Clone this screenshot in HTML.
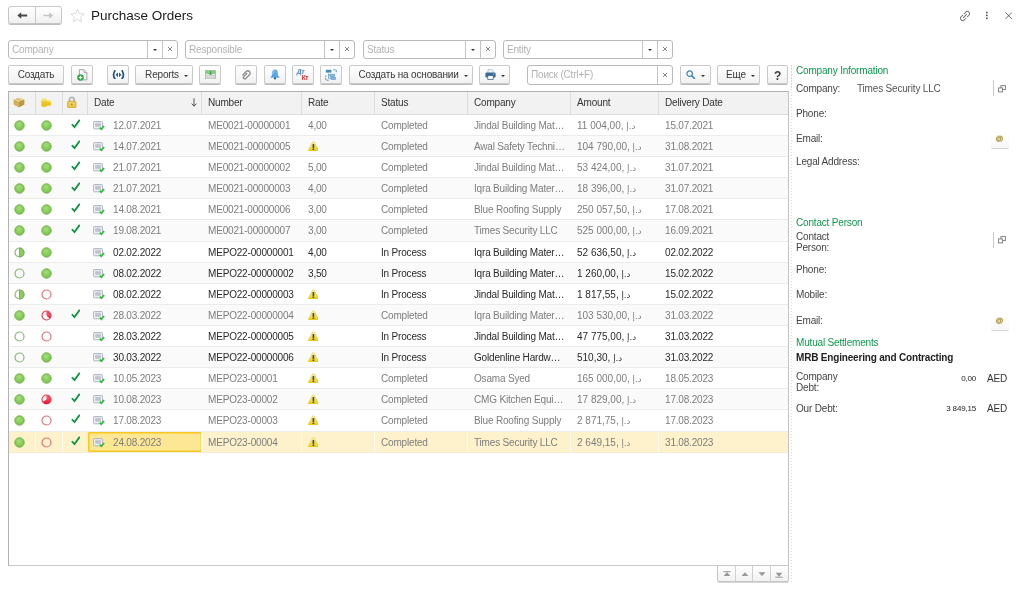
<!DOCTYPE html>
<html lang="en">
<head>
<meta charset="utf-8">
<title>Purchase Orders</title>
<style>
*{box-sizing:border-box;margin:0;padding:0}
html,body{width:1024px;height:590px;overflow:hidden;background:#fff}
body{position:relative;font-family:"Liberation Sans","DejaVu Sans",sans-serif;font-size:10px;letter-spacing:-0.18px;color:#333;line-height:1}
.abs{position:absolute}
.btn{position:absolute;top:65px;height:19px;border:1px solid #c9c9c9;border-radius:2px;background:linear-gradient(#ffffff,#f1f1f1);box-shadow:0 1px 0 #b9b9b9;display:flex;align-items:center;justify-content:center;color:#3a3a3a;white-space:nowrap;padding-top:0}
.btn svg{display:block}
.caret{display:inline-block;width:0;height:0;border-left:2.5px solid transparent;border-right:2.5px solid transparent;border-top:2.5px solid #333;margin-left:5px;position:relative;top:1px}
.fld{position:absolute;top:40px;height:19px;border:1px solid #b9b9b9;border-radius:3px;background:#fff;color:#b2b2b2}
.fld .ph{position:absolute;left:3px;top:4px}
.fld .dv{position:absolute;top:0;bottom:0;width:1px;background:#c4c4c4}
.fld .dd{position:absolute;margin-left:0.7px;top:7.5px;width:0;height:0;border-left:2.5px solid transparent;border-right:2.5px solid transparent;border-top:2.5px solid #333}
.fld .x{position:absolute;top:5px;width:6px;height:6px}
#tbl{position:absolute;left:8px;top:91px;width:781px;height:475px;border:1px solid #b2b2b2;border-bottom-color:#cacaca;border-right-color:#c4c4c4;background:#fff;overflow:hidden}
#hdr{position:absolute;left:0;top:0;width:780px;height:24px;background:#f2f2f2;border-bottom:1px solid #dcdcdc}
.h{position:absolute;top:0;height:23px;border-left:1px solid #dcdcdc;padding-left:6px;line-height:24px;color:#333}
.h:first-child{border-left:none}
.row{position:absolute;left:0;width:780px;border-bottom:1px solid #ececec;color:#7d7d7d;background:#fff}
.row.alt{background:#fafafa}
.row.dark{color:#2a2a2a}
.row.sel{background:#fdf2cb;border-bottom-color:#f3ecd2}
.c{position:absolute;top:0;bottom:0;padding-left:7px;line-height:inherit;white-space:nowrap;overflow:hidden}
.row.sel .c{box-shadow:inset 1px 0 0 #fffbee}
.row.sel .c.cur + .c{box-shadow:inset 2px 0 0 #fffbee}
.row.sel .c:first-child{box-shadow:none}
.c.ic{padding-left:0}
.ci{position:absolute;left:6.2px;top:5px;width:11px;height:11px}
.chk{position:absolute;left:8.6px;top:4.4px;width:9.6px;height:9.4px}
.doc{position:absolute;left:6px;top:6px;width:12px;height:10px}
.warn{position:absolute;left:6.6px;top:4.6px;width:10.8px;height:10.8px}
.dt{position:absolute;left:26px;top:0}
.c.cur{background:#fde694;border:1px solid #f8c822;border-radius:1px;box-shadow:inset 0 0 0 1px #fbd858 !important;line-height:19px;margin-left:1px}
.c.cur .doc{left:4px;top:5px}
.c.cur .dt{left:24px;top:0}
.ar{font-family:"DejaVu Sans",sans-serif;font-size:8.6px}
.lbl{position:absolute;left:796px;color:#444;white-space:nowrap}
.lbl.g{color:#0a9a4a}
</style>
</head>
<body>
<div id="root" style="position:absolute;left:0;top:0;width:1024px;height:590px;will-change:transform">
<svg width="0" height="0" style="position:absolute">
<defs>
<radialGradient id="gg" cx="0.45" cy="0.35" r="0.75"><stop offset="0" stop-color="#a6dd78"/><stop offset="1" stop-color="#6cbf3f"/></radialGradient>
<linearGradient id="wg" x1="0" y1="0" x2="0" y2="1"><stop offset="0" stop-color="#fdf6c0"/><stop offset="0.55" stop-color="#f6e050"/><stop offset="1" stop-color="#eccb00"/></linearGradient>
<radialGradient id="rg" gradientUnits="userSpaceOnUse" cx="7" cy="4" r="6"><stop offset="0" stop-color="#ff5470"/><stop offset="1" stop-color="#e4102c"/></radialGradient>
</defs>
</svg>

<!-- nav -->
<div class="abs" style="left:8px;top:6px;width:54px;height:18px;border:1px solid #c6c6c6;border-radius:3px;background:linear-gradient(#fff,#f0f0f0);box-shadow:0 1px 0 #bdbdbd">
  <div class="abs" style="left:26px;top:0;bottom:0;width:1px;background:#c9c9c9"></div>
  <svg class="abs" style="left:8.2px;top:5.2px" width="10.4" height="7" viewBox="0 0 10.4 7"><path d="M0.3 3.5 4.2 0.2V2.6H10.2V4.4H4.2V6.8Z" fill="#484848"/></svg>
  <svg class="abs" style="left:34.2px;top:5.2px" width="10.4" height="7" viewBox="0 0 10.4 7"><path d="M10.1 3.5 6.2 0.2V2.7H0.2V4.3H6.2V6.8Z" fill="#c6c6c6"/></svg>
</div>
<svg class="abs" style="left:70px;top:8px" width="15" height="15" viewBox="0 0 15 15"><path d="M7.5 1.2 9.4 5.6 14.1 6 10.5 9.1 11.6 13.8 7.5 11.3 3.4 13.8 4.5 9.1 0.9 6 5.6 5.6Z" fill="#fff" stroke="#d6d6d6" stroke-width="0.9" stroke-linejoin="round"/></svg>
<div class="abs" style="left:91px;top:8px;font-size:13.5px;letter-spacing:0;line-height:15px;color:#1c1c1c;white-space:nowrap">Purchase Orders</div>

<!-- top right icons -->
<svg class="abs" style="left:957.6px;top:8.6px" width="14" height="14" viewBox="0 0 14 14"><g transform="rotate(-45 7 7)" fill="none" stroke="#707070" stroke-width="0.95" stroke-linecap="round"><path d="M8 4.8H10.3a2.2 2.2 0 0 1 0 4.4H8"/><path d="M6 4.8H3.7a2.2 2.2 0 0 0 0 4.4H6"/><path d="M4.8 7H9.2"/></g></svg>
<svg class="abs" style="left:985px;top:11px" width="4" height="9" viewBox="0 0 4 9"><rect x="1" y="0.7" width="1.6" height="1.6" fill="#555"/><rect x="1" y="3.6" width="1.6" height="1.6" fill="#555"/><rect x="1" y="6.5" width="1.6" height="1.6" fill="#555"/></svg>
<svg class="abs" style="left:1005px;top:11.6px" width="7.4" height="7.4" viewBox="0 0 8 8"><path d="M0.5 0.5 7.5 7.5M7.5 0.5 0.5 7.5" stroke="#555" stroke-width="0.95" fill="none"/></svg>

<!-- filter fields -->
<div class="fld" style="left:8px;width:170px"><span class="ph">Company</span><i class="dv" style="left:138px"></i><i class="dv" style="left:153px"></i><i class="dd" style="left:143px"></i><svg class="x" style="left:158px" viewBox="0 0 6 6"><path d="M1 1 5 5M5 1 1 5" stroke="#777" stroke-width="0.9"/></svg></div>
<div class="fld" style="left:185px;width:170px"><span class="ph">Responsible</span><i class="dv" style="left:138px"></i><i class="dv" style="left:153px"></i><i class="dd" style="left:143px"></i><svg class="x" style="left:158px" viewBox="0 0 6 6"><path d="M1 1 5 5M5 1 1 5" stroke="#777" stroke-width="0.9"/></svg></div>
<div class="fld" style="left:363px;width:133px"><span class="ph">Status</span><i class="dv" style="left:101px"></i><i class="dv" style="left:116px"></i><i class="dd" style="left:106px"></i><svg class="x" style="left:121px" viewBox="0 0 6 6"><path d="M1 1 5 5M5 1 1 5" stroke="#777" stroke-width="0.9"/></svg></div>
<div class="fld" style="left:503px;width:170px"><span class="ph">Entity</span><i class="dv" style="left:138px"></i><i class="dv" style="left:153px"></i><i class="dd" style="left:143px"></i><svg class="x" style="left:158px" viewBox="0 0 6 6"><path d="M1 1 5 5M5 1 1 5" stroke="#777" stroke-width="0.9"/></svg></div>

<!-- toolbar -->
<div class="btn" style="left:8px;width:56px">Создать</div>
<div class="btn" style="left:71px;width:22px"><svg width="11" height="12" viewBox="0 0 11 12"><path d="M2.4 0.7H7L9.9 3.6V10.9H2.4Z" fill="#f6f7f8" stroke="#9a9ea4" stroke-width="0.9"/><path d="M7 0.7V3.6H9.9" fill="#e4e7ea" stroke="#9a9ea4" stroke-width="0.8"/><circle cx="3.5" cy="8.5" r="3.3" fill="#2eaa48"/><path d="M3.5 6.7V10.3M1.7 8.5H5.3" stroke="#fff" stroke-width="1.2"/></svg></div>
<div class="btn" style="left:107px;width:22px"><svg width="13" height="9.6" viewBox="0 0 12 9"><path d="M2.9 0.3Q-0.2 4.5 2.9 8.7M9.1 0.3Q12.2 4.5 9.1 8.7" fill="none" stroke="#1f5582" stroke-width="1.6"/><path d="M5.5 2.3 3.3 4.5 5.5 6.7ZM6.5 2.3 8.7 4.5 6.5 6.7Z" fill="#1f5582"/></svg></div>
<div class="btn" style="left:135px;width:58px;padding-left:5px">Reports<i class="caret"></i></div>
<div class="btn" style="left:199px;width:22px"><svg width="11" height="9.4" viewBox="0 0 12 10"><rect x="0.5" y="0.5" width="11" height="9" fill="#f4f6f4" stroke="#a4aca4" stroke-width="0.8"/><rect x="0.5" y="0.5" width="11" height="3.6" fill="#86c886"/><path d="M0.5 5.6H11.5M0.5 7.6H11.5" stroke="#a4aca4" stroke-width="0.8"/><path d="M6 1V4.6M4.3 3.4 6 5.2 7.7 3.4" stroke="#2f9a3a" stroke-width="1" fill="none"/></svg></div>
<div class="btn" style="left:235px;width:22px"><svg width="10" height="10" viewBox="0 0 10 10"><g transform="rotate(45 5 5)"><path d="M3.6 2.6V7.4a1.4 1.4 0 0 0 2.8 0V2.2a2.3 2.3 0 0 0-4.6 0V7.6" fill="none" stroke="#8e8e8e" stroke-width="1.35" transform="translate(0.9,0.2)"/></g></svg></div>
<div class="btn" style="left:264px;width:22px"><svg width="10" height="11" viewBox="0 0 10 11"><path d="M5 0.6c-1.9 0-2.7 1.5-2.7 3.3 0 2.1-0.6 3.3-1.7 4.3h8.8C8.3 7.2 7.7 6 7.7 3.9 7.7 2.1 6.9 0.6 5 0.6Z" fill="#5aa6ea"/><path d="M5 0.6c-1.9 0-2.7 1.5-2.7 3.3 0 0.6 0 1.100-0.100 1.600C4 5 5 3 5 0.6Z" fill="#8cc4f4" opacity="0.7"/><path d="M0.600 8.200h8.800" stroke="#3f8ad2" stroke-width="0.7"/><circle cx="5" cy="9.400" r="1.100" fill="#2c5f94"/></svg></div>
<div class="btn" style="left:292px;width:22px"><svg width="14" height="13" viewBox="0 0 14 13" style="letter-spacing:-0.4px"><text x="1.4" y="5.8" font-family="Liberation Sans,sans-serif" font-size="6.9" font-weight="bold" fill="#4d80b6" transform="skewX(-8)">Дт</text><text x="5.8" y="11.8" font-family="Liberation Sans,sans-serif" font-size="6.4" font-weight="bold" fill="#d42a2a">Кт</text></svg></div>
<div class="btn" style="left:320px;width:22px"><svg width="12" height="12" viewBox="0 0 12 12"><g fill="none" stroke="#4a88bc" stroke-width="0.9"><path d="M8.3 0.8H11.2V4.2M3.7 11.2H0.8V6.5" stroke-dasharray="2.2 0.8"/></g><rect x="0.8" y="0.8" width="5.6" height="2.8" fill="#4a88c0"/><rect x="5" y="5.2" width="4.6" height="2.2" fill="#8fbfe0" stroke="#4a8fc0" stroke-width="0.6"/><rect x="6" y="8.2" width="4.4" height="2.2" fill="#8fbfe0" stroke="#4a8fc0" stroke-width="0.6"/><path d="M3.5 4.6V9.3H6M3.5 6.3H5" fill="none" stroke="#4a8fc0" stroke-width="0.7"/></svg></div>
<div class="btn" style="left:349px;width:124px;padding-left:4px">Создать на основании<i class="caret"></i></div>
<div class="btn" style="left:479px;width:31px"><svg width="11" height="11" viewBox="0 0 11 11"><path d="M3 3.8V0.7H6.6L8.2 2.2V3.8" fill="#f4f8fc" stroke="#9ab4cc" stroke-width="0.8"/><rect x="0.4" y="3.6" width="10.2" height="4.9" rx="1.2" fill="#3b6a96"/><rect x="8" y="4.6" width="1.4" height="0.8" fill="#9cc0e0"/><rect x="2.8" y="6.6" width="5.4" height="3.8" fill="#fff" stroke="#3b6a96" stroke-width="0.8"/></svg><i class="caret"></i></div>
<div class="fld" style="left:527px;top:65px;width:146px;height:20px"><span class="ph" style="top:4px">Поиск (Ctrl+F)</span><i class="dv" style="left:129px"></i><svg class="x" style="left:134px;top:6px" viewBox="0 0 6 6"><path d="M1 1 5 5M5 1 1 5" stroke="#777" stroke-width="0.9"/></svg></div>
<div class="btn" style="left:680px;width:31px"><svg width="9.4" height="9.4" viewBox="0 0 10 10"><circle cx="3.9" cy="3.9" r="2.9" fill="none" stroke="#3a88c0" stroke-width="1.3"/><path d="M6 6 9 9" stroke="#3a88c0" stroke-width="1.7" stroke-linecap="round"/></svg><i class="caret"></i></div>
<div class="btn" style="left:717px;width:43px;padding-left:4px">Еще<i class="caret"></i></div>
<div class="btn" style="left:767px;width:21px;font-weight:bold;font-size:12px;color:#3c3c3c;padding-top:2px">?</div>

<!-- table -->
<div id="tbl"><div id="inner" class="abs" style="left:-1px;top:-1px;width:780px;height:476px">
 <div id="hdr">
  <div class="h" style="left:0;width:27px;border-left:none"><svg class="abs" style="left:4.9px;top:6px" width="12" height="11" viewBox="0 0 13 12"><path d="M6.5 0.8 12.2 3 12.2 8.2 6.5 11.2 0.8 8.2 0.8 3Z" fill="#ccaa54"/><path d="M6.5 0.8 12.2 3 6.5 5.4 0.8 3Z" fill="#e8d494"/><path d="M6.5 5.4 12.2 3 12.2 8.2 6.5 11.2Z" fill="#bc9640"/><path d="M0.8 3 6.5 5.4V11.2L0.8 8.2Z" fill="#d4b05c"/><path d="M3.4 1.9 9.3 4.3" stroke="#c8a450" stroke-width="0.7"/></svg></div>
  <div class="h" style="left:27px;width:27px"><svg class="abs" style="left:4.8px;top:6.6px" width="10.4" height="9.6" viewBox="0 0 11 10"><rect x="0.4" y="1.4" width="6" height="8" rx="1.8" fill="#f0c828"/><ellipse cx="3.4" cy="2" rx="3" ry="1.5" fill="#f8e268"/><path d="M0.5 4.6Q3.4 6 6.3 4.6M0.5 6.8Q3.4 8.2 6.3 6.8" stroke="#dcae18" stroke-width="0.5" fill="none"/><rect x="5.8" y="2.8" width="4.8" height="5.4" rx="1.5" fill="#eec024"/><ellipse cx="8.2" cy="3.4" rx="2.4" ry="1.2" fill="#f8de60"/></svg></div>
  <div class="h" style="left:54px;width:25px"><svg class="abs" style="left:4.4px;top:4.8px" width="9.6" height="12.6" viewBox="0 0 10 13"><path d="M2.6 6V3.8a2.4 2.4 0 0 1 4.8 0V6" fill="none" stroke="#b4b4b4" stroke-width="1.9"/><rect x="0.7" y="5.5" width="8.6" height="6.9" rx="1" fill="#ecc848" stroke="#c8a430" stroke-width="0.8"/><rect x="1.6" y="6.4" width="6.8" height="2.4" fill="#f4d868" opacity="0.7"/><rect x="4.3" y="7.8" width="1.4" height="2" fill="#b08a18"/></svg></div>
  <div class="h" style="left:79px;width:114px">Date<svg class="abs" style="left:103px;top:7px" width="6" height="9" viewBox="0 0 6 9"><path d="M3 0.3V8M0.6 5.6 3 8.2 5.4 5.6" fill="none" stroke="#444" stroke-width="0.9"/></svg></div>
  <div class="h" style="left:193px;width:100px">Number</div>
  <div class="h" style="left:293px;width:73px">Rate</div>
  <div class="h" style="left:366px;width:93px">Status</div>
  <div class="h" style="left:459px;width:103px">Company</div>
  <div class="h" style="left:562px;width:88px">Amount</div>
  <div class="h" style="left:650px;width:130px">Delivery Date</div>
 </div>
 <div id="rows" class="abs" style="left:0;top:0;width:780px">
<div class="row" style="top:24px;height:21px;line-height:21px"><div class="c ic" style="left:0px;width:27px"><svg class="ci" viewBox="0 0 11 11"><circle cx="5.5" cy="5.5" r="4.7" fill="url(#gg)" stroke="#72b04c" stroke-width="1"/></svg></div><div class="c ic" style="left:27px;width:27px"><svg class="ci" viewBox="0 0 11 11"><circle cx="5.5" cy="5.5" r="4.7" fill="url(#gg)" stroke="#72b04c" stroke-width="1"/></svg></div><div class="c ic" style="left:54px;width:25px"><svg class="chk" viewBox="0 0 10 10"><path d="M0.8 5.6 L3.6 8.6 L9.2 0.9" fill="none" stroke="#0a9440" stroke-width="1.9" stroke-linecap="butt" stroke-linejoin="miter"/></svg></div><div class="c date" style="left:79px;width:114px"><svg class="doc" viewBox="0 0 12 10"><rect x="0.6" y="0.6" width="8.8" height="7.2" rx="0.5" fill="#f4f6fa" stroke="#adb5c4" stroke-width="1"/><rect x="2.2" y="1.6" width="5.6" height="4.6" fill="#c8ccd5"/><rect x="2.2" y="3" width="5.6" height="1.6" fill="#bcc1cb"/><path d="M6.8 6.7 L8.3 8.2 L11.1 5.0" fill="none" stroke="#2cbc3a" stroke-width="1.7"/></svg><span class="dt">12.07.2021</span></div><div class="c " style="left:193px;width:100px">ME0021-00000001</div><div class="c " style="left:293px;width:73px">4,00</div><div class="c " style="left:366px;width:93px">Completed</div><div class="c " style="left:459px;width:103px">Jindal Building Mat…</div><div class="c " style="left:562px;width:88px">11 004,00, <span class="ar">د.إ</span></div><div class="c " style="left:650px;width:130px">15.07.2021</div></div>
<div class="row alt" style="top:45px;height:21px;line-height:21px"><div class="c ic" style="left:0px;width:27px"><svg class="ci" viewBox="0 0 11 11"><circle cx="5.5" cy="5.5" r="4.7" fill="url(#gg)" stroke="#72b04c" stroke-width="1"/></svg></div><div class="c ic" style="left:27px;width:27px"><svg class="ci" viewBox="0 0 11 11"><circle cx="5.5" cy="5.5" r="4.7" fill="url(#gg)" stroke="#72b04c" stroke-width="1"/></svg></div><div class="c ic" style="left:54px;width:25px"><svg class="chk" viewBox="0 0 10 10"><path d="M0.8 5.6 L3.6 8.6 L9.2 0.9" fill="none" stroke="#0a9440" stroke-width="1.9" stroke-linecap="butt" stroke-linejoin="miter"/></svg></div><div class="c date" style="left:79px;width:114px"><svg class="doc" viewBox="0 0 12 10"><rect x="0.6" y="0.6" width="8.8" height="7.2" rx="0.5" fill="#f4f6fa" stroke="#adb5c4" stroke-width="1"/><rect x="2.2" y="1.6" width="5.6" height="4.6" fill="#c8ccd5"/><rect x="2.2" y="3" width="5.6" height="1.6" fill="#bcc1cb"/><path d="M6.8 6.7 L8.3 8.2 L11.1 5.0" fill="none" stroke="#2cbc3a" stroke-width="1.7"/></svg><span class="dt">14.07.2021</span></div><div class="c " style="left:193px;width:100px">ME0021-00000005</div><div class="c " style="left:293px;width:73px"><svg class="warn" viewBox="0 0 12 12"><path d="M4.9 1.5 Q6 -0.2 7.1 1.5 L11.5 10.3 Q11.8 11.4 10.8 11.4 L1.2 11.4 Q0.2 11.4 0.5 10.3 Z" fill="url(#wg)" stroke="#e0c020" stroke-width="0.6" stroke-linejoin="round"/><rect x="5.05" y="3.4" width="1.9" height="4.3" fill="#4a4a44"/><rect x="5.05" y="8.3" width="1.9" height="1.7" fill="#4a4a44"/></svg></div><div class="c " style="left:366px;width:93px">Completed</div><div class="c " style="left:459px;width:103px">Awal Safety Techni…</div><div class="c " style="left:562px;width:88px">104 790,00, <span class="ar">د.إ</span></div><div class="c " style="left:650px;width:130px">31.08.2021</div></div>
<div class="row" style="top:66px;height:21px;line-height:21px"><div class="c ic" style="left:0px;width:27px"><svg class="ci" viewBox="0 0 11 11"><circle cx="5.5" cy="5.5" r="4.7" fill="url(#gg)" stroke="#72b04c" stroke-width="1"/></svg></div><div class="c ic" style="left:27px;width:27px"><svg class="ci" viewBox="0 0 11 11"><circle cx="5.5" cy="5.5" r="4.7" fill="url(#gg)" stroke="#72b04c" stroke-width="1"/></svg></div><div class="c ic" style="left:54px;width:25px"><svg class="chk" viewBox="0 0 10 10"><path d="M0.8 5.6 L3.6 8.6 L9.2 0.9" fill="none" stroke="#0a9440" stroke-width="1.9" stroke-linecap="butt" stroke-linejoin="miter"/></svg></div><div class="c date" style="left:79px;width:114px"><svg class="doc" viewBox="0 0 12 10"><rect x="0.6" y="0.6" width="8.8" height="7.2" rx="0.5" fill="#f4f6fa" stroke="#adb5c4" stroke-width="1"/><rect x="2.2" y="1.6" width="5.6" height="4.6" fill="#c8ccd5"/><rect x="2.2" y="3" width="5.6" height="1.6" fill="#bcc1cb"/><path d="M6.8 6.7 L8.3 8.2 L11.1 5.0" fill="none" stroke="#2cbc3a" stroke-width="1.7"/></svg><span class="dt">21.07.2021</span></div><div class="c " style="left:193px;width:100px">ME0021-00000002</div><div class="c " style="left:293px;width:73px">5,00</div><div class="c " style="left:366px;width:93px">Completed</div><div class="c " style="left:459px;width:103px">Jindal Building Mat…</div><div class="c " style="left:562px;width:88px">53 424,00, <span class="ar">د.إ</span></div><div class="c " style="left:650px;width:130px">31.07.2021</div></div>
<div class="row alt" style="top:87px;height:21px;line-height:21px"><div class="c ic" style="left:0px;width:27px"><svg class="ci" viewBox="0 0 11 11"><circle cx="5.5" cy="5.5" r="4.7" fill="url(#gg)" stroke="#72b04c" stroke-width="1"/></svg></div><div class="c ic" style="left:27px;width:27px"><svg class="ci" viewBox="0 0 11 11"><circle cx="5.5" cy="5.5" r="4.7" fill="url(#gg)" stroke="#72b04c" stroke-width="1"/></svg></div><div class="c ic" style="left:54px;width:25px"><svg class="chk" viewBox="0 0 10 10"><path d="M0.8 5.6 L3.6 8.6 L9.2 0.9" fill="none" stroke="#0a9440" stroke-width="1.9" stroke-linecap="butt" stroke-linejoin="miter"/></svg></div><div class="c date" style="left:79px;width:114px"><svg class="doc" viewBox="0 0 12 10"><rect x="0.6" y="0.6" width="8.8" height="7.2" rx="0.5" fill="#f4f6fa" stroke="#adb5c4" stroke-width="1"/><rect x="2.2" y="1.6" width="5.6" height="4.6" fill="#c8ccd5"/><rect x="2.2" y="3" width="5.6" height="1.6" fill="#bcc1cb"/><path d="M6.8 6.7 L8.3 8.2 L11.1 5.0" fill="none" stroke="#2cbc3a" stroke-width="1.7"/></svg><span class="dt">21.07.2021</span></div><div class="c " style="left:193px;width:100px">ME0021-00000003</div><div class="c " style="left:293px;width:73px">4,00</div><div class="c " style="left:366px;width:93px">Completed</div><div class="c " style="left:459px;width:103px">Iqra Building Mater…</div><div class="c " style="left:562px;width:88px">18 396,00, <span class="ar">د.إ</span></div><div class="c " style="left:650px;width:130px">31.07.2021</div></div>
<div class="row" style="top:108px;height:21px;line-height:21px"><div class="c ic" style="left:0px;width:27px"><svg class="ci" viewBox="0 0 11 11"><circle cx="5.5" cy="5.5" r="4.7" fill="url(#gg)" stroke="#72b04c" stroke-width="1"/></svg></div><div class="c ic" style="left:27px;width:27px"><svg class="ci" viewBox="0 0 11 11"><circle cx="5.5" cy="5.5" r="4.7" fill="url(#gg)" stroke="#72b04c" stroke-width="1"/></svg></div><div class="c ic" style="left:54px;width:25px"><svg class="chk" viewBox="0 0 10 10"><path d="M0.8 5.6 L3.6 8.6 L9.2 0.9" fill="none" stroke="#0a9440" stroke-width="1.9" stroke-linecap="butt" stroke-linejoin="miter"/></svg></div><div class="c date" style="left:79px;width:114px"><svg class="doc" viewBox="0 0 12 10"><rect x="0.6" y="0.6" width="8.8" height="7.2" rx="0.5" fill="#f4f6fa" stroke="#adb5c4" stroke-width="1"/><rect x="2.2" y="1.6" width="5.6" height="4.6" fill="#c8ccd5"/><rect x="2.2" y="3" width="5.6" height="1.6" fill="#bcc1cb"/><path d="M6.8 6.7 L8.3 8.2 L11.1 5.0" fill="none" stroke="#2cbc3a" stroke-width="1.7"/></svg><span class="dt">14.08.2021</span></div><div class="c " style="left:193px;width:100px">ME0021-00000006</div><div class="c " style="left:293px;width:73px">3,00</div><div class="c " style="left:366px;width:93px">Completed</div><div class="c " style="left:459px;width:103px">Blue Roofing Supply</div><div class="c " style="left:562px;width:88px">250 057,50, <span class="ar">د.إ</span></div><div class="c " style="left:650px;width:130px">17.08.2021</div></div>
<div class="row alt" style="top:129px;height:22px;line-height:22px"><div class="c ic" style="left:0px;width:27px"><svg class="ci" viewBox="0 0 11 11"><circle cx="5.5" cy="5.5" r="4.7" fill="url(#gg)" stroke="#72b04c" stroke-width="1"/></svg></div><div class="c ic" style="left:27px;width:27px"><svg class="ci" viewBox="0 0 11 11"><circle cx="5.5" cy="5.5" r="4.7" fill="url(#gg)" stroke="#72b04c" stroke-width="1"/></svg></div><div class="c ic" style="left:54px;width:25px"><svg class="chk" viewBox="0 0 10 10"><path d="M0.8 5.6 L3.6 8.6 L9.2 0.9" fill="none" stroke="#0a9440" stroke-width="1.9" stroke-linecap="butt" stroke-linejoin="miter"/></svg></div><div class="c date" style="left:79px;width:114px"><svg class="doc" viewBox="0 0 12 10"><rect x="0.6" y="0.6" width="8.8" height="7.2" rx="0.5" fill="#f4f6fa" stroke="#adb5c4" stroke-width="1"/><rect x="2.2" y="1.6" width="5.6" height="4.6" fill="#c8ccd5"/><rect x="2.2" y="3" width="5.6" height="1.6" fill="#bcc1cb"/><path d="M6.8 6.7 L8.3 8.2 L11.1 5.0" fill="none" stroke="#2cbc3a" stroke-width="1.7"/></svg><span class="dt">19.08.2021</span></div><div class="c " style="left:193px;width:100px">ME0021-00000007</div><div class="c " style="left:293px;width:73px">3,00</div><div class="c " style="left:366px;width:93px">Completed</div><div class="c " style="left:459px;width:103px">Times Security LLC</div><div class="c " style="left:562px;width:88px">525 000,00, <span class="ar">د.إ</span></div><div class="c " style="left:650px;width:130px">16.09.2021</div></div>
<div class="row dark" style="top:151px;height:21px;line-height:21px"><div class="c ic" style="left:0px;width:27px"><svg class="ci" viewBox="0 0 11 11"><circle cx="5.5" cy="5.5" r="4.5" fill="none" stroke="#8ab876" stroke-width="1.2"/><path d="M5.5 1 A4.5 4.5 0 0 1 5.5 10 Z" fill="#8ccc5c" stroke="#6aa84f" stroke-width="0.8"/></svg></div><div class="c ic" style="left:27px;width:27px"><svg class="ci" viewBox="0 0 11 11"><circle cx="5.5" cy="5.5" r="4.7" fill="url(#gg)" stroke="#72b04c" stroke-width="1"/></svg></div><div class="c ic" style="left:54px;width:25px"></div><div class="c date" style="left:79px;width:114px"><svg class="doc" viewBox="0 0 12 10"><rect x="0.6" y="0.6" width="8.8" height="7.2" rx="0.5" fill="#f4f6fa" stroke="#adb5c4" stroke-width="1"/><rect x="2.2" y="1.6" width="5.6" height="4.6" fill="#c8ccd5"/><rect x="2.2" y="3" width="5.6" height="1.6" fill="#bcc1cb"/><path d="M6.8 6.7 L8.3 8.2 L11.1 5.0" fill="none" stroke="#2cbc3a" stroke-width="1.7"/></svg><span class="dt">02.02.2022</span></div><div class="c " style="left:193px;width:100px">MEPO22-00000001</div><div class="c " style="left:293px;width:73px">4,00</div><div class="c " style="left:366px;width:93px">In Process</div><div class="c " style="left:459px;width:103px">Iqra Building Mater…</div><div class="c " style="left:562px;width:88px">52 636,50, <span class="ar">د.إ</span></div><div class="c " style="left:650px;width:130px">02.02.2022</div></div>
<div class="row alt dark" style="top:172px;height:21px;line-height:21px"><div class="c ic" style="left:0px;width:27px"><svg class="ci" viewBox="0 0 11 11"><circle cx="5.5" cy="5.5" r="4.5" fill="none" stroke="#8ab876" stroke-width="1.2"/></svg></div><div class="c ic" style="left:27px;width:27px"><svg class="ci" viewBox="0 0 11 11"><circle cx="5.5" cy="5.5" r="4.7" fill="url(#gg)" stroke="#72b04c" stroke-width="1"/></svg></div><div class="c ic" style="left:54px;width:25px"></div><div class="c date" style="left:79px;width:114px"><svg class="doc" viewBox="0 0 12 10"><rect x="0.6" y="0.6" width="8.8" height="7.2" rx="0.5" fill="#f4f6fa" stroke="#adb5c4" stroke-width="1"/><rect x="2.2" y="1.6" width="5.6" height="4.6" fill="#c8ccd5"/><rect x="2.2" y="3" width="5.6" height="1.6" fill="#bcc1cb"/><path d="M6.8 6.7 L8.3 8.2 L11.1 5.0" fill="none" stroke="#2cbc3a" stroke-width="1.7"/></svg><span class="dt">08.02.2022</span></div><div class="c " style="left:193px;width:100px">MEPO22-00000002</div><div class="c " style="left:293px;width:73px">3,50</div><div class="c " style="left:366px;width:93px">In Process</div><div class="c " style="left:459px;width:103px">Iqra Building Mater…</div><div class="c " style="left:562px;width:88px">1 260,00, <span class="ar">د.إ</span></div><div class="c " style="left:650px;width:130px">15.02.2022</div></div>
<div class="row dark" style="top:193px;height:21px;line-height:21px"><div class="c ic" style="left:0px;width:27px"><svg class="ci" viewBox="0 0 11 11"><circle cx="5.5" cy="5.5" r="4.5" fill="none" stroke="#8ab876" stroke-width="1.2"/><path d="M5.5 1 A4.5 4.5 0 0 1 5.5 10 Z" fill="#8ccc5c" stroke="#6aa84f" stroke-width="0.8"/></svg></div><div class="c ic" style="left:27px;width:27px"><svg class="ci" viewBox="0 0 11 11"><circle cx="5.5" cy="5.5" r="4.5" fill="none" stroke="#e0727c" stroke-width="1.2"/></svg></div><div class="c ic" style="left:54px;width:25px"></div><div class="c date" style="left:79px;width:114px"><svg class="doc" viewBox="0 0 12 10"><rect x="0.6" y="0.6" width="8.8" height="7.2" rx="0.5" fill="#f4f6fa" stroke="#adb5c4" stroke-width="1"/><rect x="2.2" y="1.6" width="5.6" height="4.6" fill="#c8ccd5"/><rect x="2.2" y="3" width="5.6" height="1.6" fill="#bcc1cb"/><path d="M6.8 6.7 L8.3 8.2 L11.1 5.0" fill="none" stroke="#2cbc3a" stroke-width="1.7"/></svg><span class="dt">08.02.2022</span></div><div class="c " style="left:193px;width:100px">MEPO22-00000003</div><div class="c " style="left:293px;width:73px"><svg class="warn" viewBox="0 0 12 12"><path d="M4.9 1.5 Q6 -0.2 7.1 1.5 L11.5 10.3 Q11.8 11.4 10.8 11.4 L1.2 11.4 Q0.2 11.4 0.5 10.3 Z" fill="url(#wg)" stroke="#e0c020" stroke-width="0.6" stroke-linejoin="round"/><rect x="5.05" y="3.4" width="1.9" height="4.3" fill="#4a4a44"/><rect x="5.05" y="8.3" width="1.9" height="1.7" fill="#4a4a44"/></svg></div><div class="c " style="left:366px;width:93px">In Process</div><div class="c " style="left:459px;width:103px">Jindal Building Mat…</div><div class="c " style="left:562px;width:88px">1 817,55, <span class="ar">د.إ</span></div><div class="c " style="left:650px;width:130px">15.02.2022</div></div>
<div class="row alt" style="top:214px;height:21px;line-height:21px"><div class="c ic" style="left:0px;width:27px"><svg class="ci" viewBox="0 0 11 11"><circle cx="5.5" cy="5.5" r="4.7" fill="url(#gg)" stroke="#72b04c" stroke-width="1"/></svg></div><div class="c ic" style="left:27px;width:27px"><svg class="ci" viewBox="0 0 11 11"><circle cx="5.5" cy="5.5" r="4.5" fill="none" stroke="#dc4a5c" stroke-width="1.2"/><path d="M5.5 5.5 L5.5 1 A4.5 4.5 0 0 1 8.7 8.7 Z" fill="url(#rg)"/></svg></div><div class="c ic" style="left:54px;width:25px"><svg class="chk" viewBox="0 0 10 10"><path d="M0.8 5.6 L3.6 8.6 L9.2 0.9" fill="none" stroke="#0a9440" stroke-width="1.9" stroke-linecap="butt" stroke-linejoin="miter"/></svg></div><div class="c date" style="left:79px;width:114px"><svg class="doc" viewBox="0 0 12 10"><rect x="0.6" y="0.6" width="8.8" height="7.2" rx="0.5" fill="#f4f6fa" stroke="#adb5c4" stroke-width="1"/><rect x="2.2" y="1.6" width="5.6" height="4.6" fill="#c8ccd5"/><rect x="2.2" y="3" width="5.6" height="1.6" fill="#bcc1cb"/><path d="M6.8 6.7 L8.3 8.2 L11.1 5.0" fill="none" stroke="#2cbc3a" stroke-width="1.7"/></svg><span class="dt">28.03.2022</span></div><div class="c " style="left:193px;width:100px">MEPO22-00000004</div><div class="c " style="left:293px;width:73px"><svg class="warn" viewBox="0 0 12 12"><path d="M4.9 1.5 Q6 -0.2 7.1 1.5 L11.5 10.3 Q11.8 11.4 10.8 11.4 L1.2 11.4 Q0.2 11.4 0.5 10.3 Z" fill="url(#wg)" stroke="#e0c020" stroke-width="0.6" stroke-linejoin="round"/><rect x="5.05" y="3.4" width="1.9" height="4.3" fill="#4a4a44"/><rect x="5.05" y="8.3" width="1.9" height="1.7" fill="#4a4a44"/></svg></div><div class="c " style="left:366px;width:93px">Completed</div><div class="c " style="left:459px;width:103px">Iqra Building Mater…</div><div class="c " style="left:562px;width:88px">103 530,00, <span class="ar">د.إ</span></div><div class="c " style="left:650px;width:130px">31.03.2022</div></div>
<div class="row dark" style="top:235px;height:21px;line-height:21px"><div class="c ic" style="left:0px;width:27px"><svg class="ci" viewBox="0 0 11 11"><circle cx="5.5" cy="5.5" r="4.5" fill="none" stroke="#8ab876" stroke-width="1.2"/></svg></div><div class="c ic" style="left:27px;width:27px"><svg class="ci" viewBox="0 0 11 11"><circle cx="5.5" cy="5.5" r="4.5" fill="none" stroke="#e0727c" stroke-width="1.2"/></svg></div><div class="c ic" style="left:54px;width:25px"></div><div class="c date" style="left:79px;width:114px"><svg class="doc" viewBox="0 0 12 10"><rect x="0.6" y="0.6" width="8.8" height="7.2" rx="0.5" fill="#f4f6fa" stroke="#adb5c4" stroke-width="1"/><rect x="2.2" y="1.6" width="5.6" height="4.6" fill="#c8ccd5"/><rect x="2.2" y="3" width="5.6" height="1.6" fill="#bcc1cb"/><path d="M6.8 6.7 L8.3 8.2 L11.1 5.0" fill="none" stroke="#2cbc3a" stroke-width="1.7"/></svg><span class="dt">28.03.2022</span></div><div class="c " style="left:193px;width:100px">MEPO22-00000005</div><div class="c " style="left:293px;width:73px"><svg class="warn" viewBox="0 0 12 12"><path d="M4.9 1.5 Q6 -0.2 7.1 1.5 L11.5 10.3 Q11.8 11.4 10.8 11.4 L1.2 11.4 Q0.2 11.4 0.5 10.3 Z" fill="url(#wg)" stroke="#e0c020" stroke-width="0.6" stroke-linejoin="round"/><rect x="5.05" y="3.4" width="1.9" height="4.3" fill="#4a4a44"/><rect x="5.05" y="8.3" width="1.9" height="1.7" fill="#4a4a44"/></svg></div><div class="c " style="left:366px;width:93px">In Process</div><div class="c " style="left:459px;width:103px">Jindal Building Mat…</div><div class="c " style="left:562px;width:88px">47 775,00, <span class="ar">د.إ</span></div><div class="c " style="left:650px;width:130px">31.03.2022</div></div>
<div class="row alt dark" style="top:256px;height:21px;line-height:21px"><div class="c ic" style="left:0px;width:27px"><svg class="ci" viewBox="0 0 11 11"><circle cx="5.5" cy="5.5" r="4.5" fill="none" stroke="#8ab876" stroke-width="1.2"/></svg></div><div class="c ic" style="left:27px;width:27px"><svg class="ci" viewBox="0 0 11 11"><circle cx="5.5" cy="5.5" r="4.7" fill="url(#gg)" stroke="#72b04c" stroke-width="1"/></svg></div><div class="c ic" style="left:54px;width:25px"></div><div class="c date" style="left:79px;width:114px"><svg class="doc" viewBox="0 0 12 10"><rect x="0.6" y="0.6" width="8.8" height="7.2" rx="0.5" fill="#f4f6fa" stroke="#adb5c4" stroke-width="1"/><rect x="2.2" y="1.6" width="5.6" height="4.6" fill="#c8ccd5"/><rect x="2.2" y="3" width="5.6" height="1.6" fill="#bcc1cb"/><path d="M6.8 6.7 L8.3 8.2 L11.1 5.0" fill="none" stroke="#2cbc3a" stroke-width="1.7"/></svg><span class="dt">30.03.2022</span></div><div class="c " style="left:193px;width:100px">MEPO22-00000006</div><div class="c " style="left:293px;width:73px"><svg class="warn" viewBox="0 0 12 12"><path d="M4.9 1.5 Q6 -0.2 7.1 1.5 L11.5 10.3 Q11.8 11.4 10.8 11.4 L1.2 11.4 Q0.2 11.4 0.5 10.3 Z" fill="url(#wg)" stroke="#e0c020" stroke-width="0.6" stroke-linejoin="round"/><rect x="5.05" y="3.4" width="1.9" height="4.3" fill="#4a4a44"/><rect x="5.05" y="8.3" width="1.9" height="1.7" fill="#4a4a44"/></svg></div><div class="c " style="left:366px;width:93px">In Process</div><div class="c " style="left:459px;width:103px">Goldenline Hardw…</div><div class="c " style="left:562px;width:88px">510,30, <span class="ar">د.إ</span></div><div class="c " style="left:650px;width:130px">31.03.2022</div></div>
<div class="row" style="top:277px;height:21px;line-height:21px"><div class="c ic" style="left:0px;width:27px"><svg class="ci" viewBox="0 0 11 11"><circle cx="5.5" cy="5.5" r="4.7" fill="url(#gg)" stroke="#72b04c" stroke-width="1"/></svg></div><div class="c ic" style="left:27px;width:27px"><svg class="ci" viewBox="0 0 11 11"><circle cx="5.5" cy="5.5" r="4.7" fill="url(#gg)" stroke="#72b04c" stroke-width="1"/></svg></div><div class="c ic" style="left:54px;width:25px"><svg class="chk" viewBox="0 0 10 10"><path d="M0.8 5.6 L3.6 8.6 L9.2 0.9" fill="none" stroke="#0a9440" stroke-width="1.9" stroke-linecap="butt" stroke-linejoin="miter"/></svg></div><div class="c date" style="left:79px;width:114px"><svg class="doc" viewBox="0 0 12 10"><rect x="0.6" y="0.6" width="8.8" height="7.2" rx="0.5" fill="#f4f6fa" stroke="#adb5c4" stroke-width="1"/><rect x="2.2" y="1.6" width="5.6" height="4.6" fill="#c8ccd5"/><rect x="2.2" y="3" width="5.6" height="1.6" fill="#bcc1cb"/><path d="M6.8 6.7 L8.3 8.2 L11.1 5.0" fill="none" stroke="#2cbc3a" stroke-width="1.7"/></svg><span class="dt">10.05.2023</span></div><div class="c " style="left:193px;width:100px">MEPO23-00001</div><div class="c " style="left:293px;width:73px"><svg class="warn" viewBox="0 0 12 12"><path d="M4.9 1.5 Q6 -0.2 7.1 1.5 L11.5 10.3 Q11.8 11.4 10.8 11.4 L1.2 11.4 Q0.2 11.4 0.5 10.3 Z" fill="url(#wg)" stroke="#e0c020" stroke-width="0.6" stroke-linejoin="round"/><rect x="5.05" y="3.4" width="1.9" height="4.3" fill="#4a4a44"/><rect x="5.05" y="8.3" width="1.9" height="1.7" fill="#4a4a44"/></svg></div><div class="c " style="left:366px;width:93px">Completed</div><div class="c " style="left:459px;width:103px">Osama Syed</div><div class="c " style="left:562px;width:88px">165 000,00, <span class="ar">د.إ</span></div><div class="c " style="left:650px;width:130px">18.05.2023</div></div>
<div class="row alt" style="top:298px;height:21px;line-height:21px"><div class="c ic" style="left:0px;width:27px"><svg class="ci" viewBox="0 0 11 11"><circle cx="5.5" cy="5.5" r="4.7" fill="url(#gg)" stroke="#72b04c" stroke-width="1"/></svg></div><div class="c ic" style="left:27px;width:27px"><svg class="ci" viewBox="0 0 11 11"><circle cx="5.5" cy="5.5" r="4.5" fill="none" stroke="#dc4a5c" stroke-width="1.2"/><path d="M5.5 5.5 L5.5 1 A4.5 4.5 0 1 1 1.81 8.08 Z" fill="url(#rg)"/></svg></div><div class="c ic" style="left:54px;width:25px"><svg class="chk" viewBox="0 0 10 10"><path d="M0.8 5.6 L3.6 8.6 L9.2 0.9" fill="none" stroke="#0a9440" stroke-width="1.9" stroke-linecap="butt" stroke-linejoin="miter"/></svg></div><div class="c date" style="left:79px;width:114px"><svg class="doc" viewBox="0 0 12 10"><rect x="0.6" y="0.6" width="8.8" height="7.2" rx="0.5" fill="#f4f6fa" stroke="#adb5c4" stroke-width="1"/><rect x="2.2" y="1.6" width="5.6" height="4.6" fill="#c8ccd5"/><rect x="2.2" y="3" width="5.6" height="1.6" fill="#bcc1cb"/><path d="M6.8 6.7 L8.3 8.2 L11.1 5.0" fill="none" stroke="#2cbc3a" stroke-width="1.7"/></svg><span class="dt">10.08.2023</span></div><div class="c " style="left:193px;width:100px">MEPO23-00002</div><div class="c " style="left:293px;width:73px"><svg class="warn" viewBox="0 0 12 12"><path d="M4.9 1.5 Q6 -0.2 7.1 1.5 L11.5 10.3 Q11.8 11.4 10.8 11.4 L1.2 11.4 Q0.2 11.4 0.5 10.3 Z" fill="url(#wg)" stroke="#e0c020" stroke-width="0.6" stroke-linejoin="round"/><rect x="5.05" y="3.4" width="1.9" height="4.3" fill="#4a4a44"/><rect x="5.05" y="8.3" width="1.9" height="1.7" fill="#4a4a44"/></svg></div><div class="c " style="left:366px;width:93px">Completed</div><div class="c " style="left:459px;width:103px">CMG Kitchen Equi…</div><div class="c " style="left:562px;width:88px">17 829,00, <span class="ar">د.إ</span></div><div class="c " style="left:650px;width:130px">17.08.2023</div></div>
<div class="row" style="top:319px;height:22px;line-height:22px"><div class="c ic" style="left:0px;width:27px"><svg class="ci" viewBox="0 0 11 11"><circle cx="5.5" cy="5.5" r="4.7" fill="url(#gg)" stroke="#72b04c" stroke-width="1"/></svg></div><div class="c ic" style="left:27px;width:27px"><svg class="ci" viewBox="0 0 11 11"><circle cx="5.5" cy="5.5" r="4.5" fill="none" stroke="#e0727c" stroke-width="1.2"/></svg></div><div class="c ic" style="left:54px;width:25px"><svg class="chk" viewBox="0 0 10 10"><path d="M0.8 5.6 L3.6 8.6 L9.2 0.9" fill="none" stroke="#0a9440" stroke-width="1.9" stroke-linecap="butt" stroke-linejoin="miter"/></svg></div><div class="c date" style="left:79px;width:114px"><svg class="doc" viewBox="0 0 12 10"><rect x="0.6" y="0.6" width="8.8" height="7.2" rx="0.5" fill="#f4f6fa" stroke="#adb5c4" stroke-width="1"/><rect x="2.2" y="1.6" width="5.6" height="4.6" fill="#c8ccd5"/><rect x="2.2" y="3" width="5.6" height="1.6" fill="#bcc1cb"/><path d="M6.8 6.7 L8.3 8.2 L11.1 5.0" fill="none" stroke="#2cbc3a" stroke-width="1.7"/></svg><span class="dt">17.08.2023</span></div><div class="c " style="left:193px;width:100px">MEPO23-00003</div><div class="c " style="left:293px;width:73px"><svg class="warn" viewBox="0 0 12 12"><path d="M4.9 1.5 Q6 -0.2 7.1 1.5 L11.5 10.3 Q11.8 11.4 10.8 11.4 L1.2 11.4 Q0.2 11.4 0.5 10.3 Z" fill="url(#wg)" stroke="#e0c020" stroke-width="0.6" stroke-linejoin="round"/><rect x="5.05" y="3.4" width="1.9" height="4.3" fill="#4a4a44"/><rect x="5.05" y="8.3" width="1.9" height="1.7" fill="#4a4a44"/></svg></div><div class="c " style="left:366px;width:93px">Completed</div><div class="c " style="left:459px;width:103px">Blue Roofing Supply</div><div class="c " style="left:562px;width:88px">2 871,75, <span class="ar">د.إ</span></div><div class="c " style="left:650px;width:130px">17.08.2023</div></div>
<div class="row alt sel" style="top:341px;height:21px;line-height:21px"><div class="c ic" style="left:0px;width:27px"><svg class="ci" viewBox="0 0 11 11"><circle cx="5.5" cy="5.5" r="4.7" fill="url(#gg)" stroke="#72b04c" stroke-width="1"/></svg></div><div class="c ic" style="left:27px;width:27px"><svg class="ci" viewBox="0 0 11 11"><circle cx="5.5" cy="5.5" r="4.5" fill="none" stroke="#e0727c" stroke-width="1.2"/></svg></div><div class="c ic" style="left:54px;width:25px"><svg class="chk" viewBox="0 0 10 10"><path d="M0.8 5.6 L3.6 8.6 L9.2 0.9" fill="none" stroke="#0a9440" stroke-width="1.9" stroke-linecap="butt" stroke-linejoin="miter"/></svg></div><div class="c date cur" style="left:79px;width:114px"><svg class="doc" viewBox="0 0 12 10"><rect x="0.6" y="0.6" width="8.8" height="7.2" rx="0.5" fill="#f4f6fa" stroke="#adb5c4" stroke-width="1"/><rect x="2.2" y="1.6" width="5.6" height="4.6" fill="#c8ccd5"/><rect x="2.2" y="3" width="5.6" height="1.6" fill="#bcc1cb"/><path d="M6.8 6.7 L8.3 8.2 L11.1 5.0" fill="none" stroke="#2cbc3a" stroke-width="1.7"/></svg><span class="dt">24.08.2023</span></div><div class="c " style="left:193px;width:100px">MEPO23-00004</div><div class="c " style="left:293px;width:73px"><svg class="warn" viewBox="0 0 12 12"><path d="M4.9 1.5 Q6 -0.2 7.1 1.5 L11.5 10.3 Q11.8 11.4 10.8 11.4 L1.2 11.4 Q0.2 11.4 0.5 10.3 Z" fill="url(#wg)" stroke="#e0c020" stroke-width="0.6" stroke-linejoin="round"/><rect x="5.05" y="3.4" width="1.9" height="4.3" fill="#4a4a44"/><rect x="5.05" y="8.3" width="1.9" height="1.7" fill="#4a4a44"/></svg></div><div class="c " style="left:366px;width:93px">Completed</div><div class="c " style="left:459px;width:103px">Times Security LLC</div><div class="c " style="left:562px;width:88px">2 649,15, <span class="ar">د.إ</span></div><div class="c " style="left:650px;width:130px">31.08.2023</div></div>
 </div>
</div></div>

<!-- scroll buttons -->
<div class="abs" style="left:717px;top:565px;width:72px;height:17px;border:1px solid #c6c6c6;border-radius:0 0 2px 2px;background:linear-gradient(#fff,#f1f1f1);box-shadow:0 1px 0 #d6d6d6">
 <i class="abs" style="left:17px;top:0;bottom:0;width:1px;background:#d0d0d0"></i>
 <i class="abs" style="left:34px;top:0;bottom:0;width:1px;background:#d0d0d0"></i>
 <i class="abs" style="left:52px;top:0;bottom:0;width:1px;background:#d0d0d0"></i>
 <svg class="abs" style="left:4.5px;top:4.6px" width="8" height="6" viewBox="0 0 8 6"><path d="M0.3 0.7H7.7" stroke="#999" stroke-width="1"/><path d="M4 0.9 7.3 5H0.7Z" fill="#999"/></svg>
 <svg class="abs" style="left:22.5px;top:6px" width="8" height="4.4" viewBox="0 0 8 4.4"><path d="M4 0.3 7.6 4.2H0.4Z" fill="#999"/></svg>
 <svg class="abs" style="left:39.5px;top:6px" width="8" height="4.4" viewBox="0 0 8 4.4"><path d="M4 4.1 7.6 0.2H0.4Z" fill="#999"/></svg>
 <svg class="abs" style="left:57px;top:5.8px" width="8" height="6" viewBox="0 0 8 6"><path d="M0.3 5.2H7.7" stroke="#999" stroke-width="1"/><path d="M4 5 7.3 0.8H0.7Z" fill="#999"/></svg>
</div>

<!-- right panel -->
<div class="abs" style="left:791px;top:65px;width:1px;height:517px;background:repeating-linear-gradient(#d8d8d8 0,#d8d8d8 1.5px,transparent 1.5px,transparent 3px)"></div>
<div class="lbl g" style="top:66px">Company Information</div>
<div class="lbl" style="top:84px">Company:</div>
<div class="lbl" style="left:857px;top:84px;color:#555">Times Security LLC</div>
<i class="abs" style="left:993px;top:80px;width:1px;height:16px;background:#c8c8c8"></i>
<svg class="abs opn" style="left:998px;top:85px" width="8" height="8" viewBox="0 0 8 8"><rect x="2.9" y="0.6" width="4.5" height="4" fill="#fff" stroke="#777" stroke-width="0.9"/><rect x="0.6" y="2.9" width="4" height="4" fill="#fff" stroke="#777" stroke-width="0.9"/></svg>
<div class="lbl" style="top:109px">Phone:</div>
<div class="lbl" style="top:134px">Email:</div>
<div class="abs" style="left:991px;top:133px;width:18px;height:16px;border-bottom:1px solid #d4d4d4;border-radius:2px;background:linear-gradient(#fff,#f8f8f8)"><svg class="abs" style="left:4.4px;top:1px" width="9" height="9" viewBox="0 0 9 9"><circle cx="4.5" cy="4.5" r="3.5" fill="#e9dfb6"/><text x="4.5" y="6.9" text-anchor="middle" font-family="Liberation Sans,sans-serif" font-size="8" font-weight="bold" fill="#9c8230" letter-spacing="0">@</text></svg></div>
<div class="lbl" style="top:157px">Legal Address:</div>

<div class="lbl g" style="top:218px">Contact Person</div>
<div class="lbl" style="top:231px;line-height:11px">Contact<br>Person:</div>
<i class="abs" style="left:993px;top:232px;width:1px;height:16px;background:#c8c8c8"></i>
<svg class="abs opn" style="left:998px;top:236px" width="8" height="8" viewBox="0 0 8 8"><rect x="2.9" y="0.6" width="4.5" height="4" fill="#fff" stroke="#777" stroke-width="0.9"/><rect x="0.6" y="2.9" width="4" height="4" fill="#fff" stroke="#777" stroke-width="0.9"/></svg>
<div class="lbl" style="top:265px">Phone:</div>
<div class="lbl" style="top:290px">Mobile:</div>
<div class="lbl" style="top:316px">Email:</div>
<div class="abs" style="left:991px;top:315px;width:18px;height:16px;border-bottom:1px solid #d4d4d4;border-radius:2px;background:linear-gradient(#fff,#f8f8f8)"><svg class="abs" style="left:4.4px;top:1px" width="9" height="9" viewBox="0 0 9 9"><circle cx="4.5" cy="4.5" r="3.5" fill="#e9dfb6"/><text x="4.5" y="6.9" text-anchor="middle" font-family="Liberation Sans,sans-serif" font-size="8" font-weight="bold" fill="#9c8230" letter-spacing="0">@</text></svg></div>

<div class="lbl g" style="top:338px">Mutual Settlements</div>
<div class="lbl" style="top:353px;font-weight:bold;color:#222">MRB Engineering and Contracting</div>
<div class="lbl" style="top:371px;line-height:11px">Company<br>Debt:</div>
<div class="abs" style="left:900px;width:76px;top:375px;text-align:right;font-size:8px;color:#222">0,00</div>
<div class="lbl" style="left:987px;top:374px;color:#333">AED</div>
<div class="lbl" style="top:404px">Our Debt:</div>
<div class="abs" style="left:900px;width:76px;top:405px;text-align:right;font-size:8px;color:#222">3 849,15</div>
<div class="lbl" style="left:987px;top:404px;color:#333">AED</div>
</div>
</body>
</html>
